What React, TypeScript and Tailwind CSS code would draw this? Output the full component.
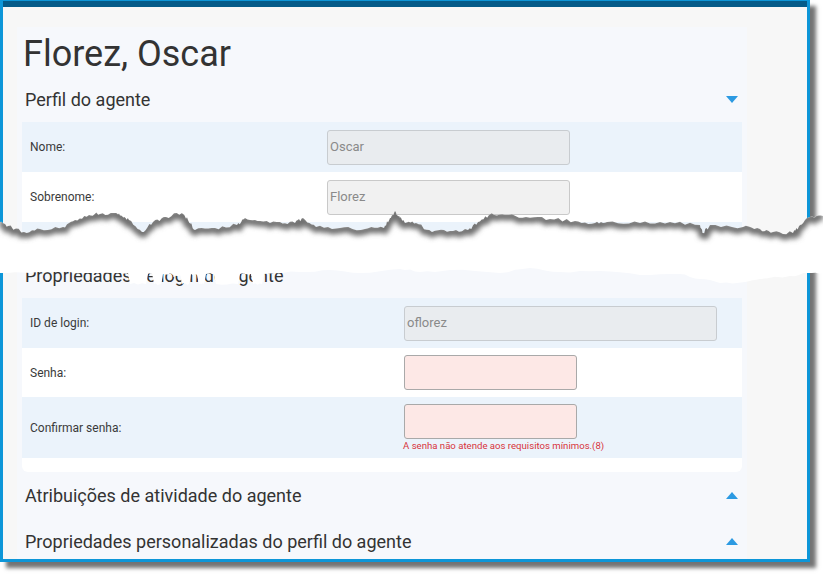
import React from "react";

type Pt = [number, number];

// torn paper edges, in page coordinates
const topEdge: Pt[] = [
  [0, 222], [8, 226], [24, 232], [40, 229], [63, 227], [75, 220], [89, 215], [100, 214],
  [116, 213], [122, 216], [129, 220], [142, 232], [153, 222], [166, 217], [182, 213],
  [188, 220], [195, 230], [215, 228], [237, 225], [245, 218], [260, 221], [280, 222],
  [295, 223], [303, 218], [316, 227], [340, 228], [365, 229], [384, 228], [390, 218],
  [395, 211], [400, 218], [405, 223], [416, 223], [432, 232], [450, 231], [468, 230],
  [478, 222], [489, 215], [505, 215], [526, 217], [550, 219], [575, 221], [595, 223],
  [607, 222], [640, 223], [670, 222], [700, 225], [703, 233], [710, 225], [743, 227],
  [760, 229], [773, 232], [793, 233], [800, 225], [810, 217], [823, 216],
];

const bottomEdge: Pt[] = [
  [0, 273], [30, 273], [60, 272], [90, 273], [120, 273], [128, 273], [130, 284], [146, 284],
  [148, 274], [152, 274], [154, 284], [161, 284], [163, 274], [172, 274], [174, 277],
  [180, 275], [182, 284], [189, 284], [191, 274], [197, 275], [199, 284], [204, 284],
  [206, 274], [214, 274], [216, 284], [238, 284], [240, 274], [251, 274], [253, 284],
  [262, 284], [264, 274], [300, 272], [330, 270], [360, 273], [400, 269], [420, 272],
  [450, 270], [500, 273], [530, 268], [560, 272], [600, 271], [640, 275], [680, 274],
  [700, 279], [720, 283], [745, 282], [760, 279], [790, 276], [808, 273], [823, 273],
];

function roughen(pts: Pt[], amp: number, seed: number, steps: number): Pt[] {
  const out: Pt[] = [];
  pts.forEach((p, i) => {
    out.push(p);
    const n = pts[i + 1];
    if (!n) return;
    for (let k = 1; k < steps; k++) {
      const t = k / steps;
      const r = Math.sin(i * 12.9898 + k * 78.233 + seed) * 43758.5453;
      const f = r - Math.floor(r);
      out.push([p[0] + (n[0] - p[0]) * t, p[1] + (n[1] - p[1]) * t + (f - 0.5) * 2 * amp]);
    }
  });
  return out;
}

const top = roughen(topEdge, 1.8, 3, 6);
const bottom = roughen(bottomEdge, 1.0, 7, 4);
const toStr = (pts: Pt[]) => pts.map((p) => `${p[0].toFixed(1)},${p[1].toFixed(1)}`).join(" ");
const gap = toStr([...top, ...[...bottom].reverse()]);

function TornEdge() {
  return (
    <svg
      className="absolute left-0 top-[195px] pointer-events-none"
      width={823}
      height={95}
      viewBox="0 195 823 95"
    >
      <defs>
        <clipPath id="gapClip">
          <polygon points={gap} />
        </clipPath>
        <filter id="blur" x="-5%" y="-50%" width="110%" height="200%">
          <feGaussianBlur stdDeviation="2.6" />
        </filter>
      </defs>
      <polygon points={gap} fill="#ffffff" />
      <g clipPath="url(#gapClip)">
        <polyline
          points={toStr(top.map((p) => [p[0], p[1] + 1.5] as Pt))}
          fill="none"
          stroke="#6f6f6f"
          strokeWidth={8}
          filter="url(#blur)"
        />
      </g>
    </svg>
  );
}

function Caret({ up }: { up?: boolean }) {
  return (
    <svg width="12" height="7" viewBox="0 0 12 7">
      <polygon points={up ? "6,0 12,7 0,7" : "0,0 12,0 6,7"} fill="#2c9ae2" />
    </svg>
  );
}

function SectionHeader({ title, up }: { title: string; up?: boolean }) {
  return (
    <div className="h-[46px] flex items-center justify-between pl-[8px] pr-[9px]">
      <span className="text-[18px] text-[#333]">{title}</span>
      <Caret up={up} />
    </div>
  );
}

function Field({
  value,
  width,
  tone,
}: {
  value?: string;
  width: number;
  tone: "gray" | "light" | "error";
}) {
  const cls =
    tone === "error"
      ? "border-[#a9a9a9] bg-[#fde8e6]"
      : tone === "light"
      ? "border-[#c9c9c9] bg-[#f1f1f1]"
      : "border-[#c8ccd0] bg-[#e9ecef]";
  return (
    <div
      className={`h-[35px] rounded-[3px] border ${cls} pl-[2px] flex items-center text-[13px] text-[#8a8a8a]`}
      style={{ width }}
    >
      {value}
    </div>
  );
}

function Row({
  label,
  labelWidth,
  blue,
  height,
  children,
}: {
  label: string;
  labelWidth: string;
  blue?: boolean;
  height: string;
  children?: React.ReactNode;
}) {
  return (
    <div className={`flex items-center ${height} ${blue ? "bg-[#ebf3fb]" : "bg-white"}`}>
      <div className={`${labelWidth} pl-[8px] text-[12px] text-[#3a3a3a]`}>{label}</div>
      {children}
    </div>
  );
}

export default function App() {
  return (
    <div className="relative w-[823px] h-[577px] bg-white overflow-hidden [font-family:Roboto,'Liberation_Sans',sans-serif]">
      <div className="w-[810px] h-[562px] flex flex-col border-x-[3px] border-b-[3px] border-[#0d96d8] shadow-[6px_6px_4px_rgba(0,0,0,0.55)]">
        <div className="h-[7px] shrink-0 bg-[#055b89] border-t border-[#0d96d8]" />
        <div className="flex-1 overflow-hidden bg-[#f7f7f7] pl-[14px] pt-[20px]">
          <div className="w-[730px] bg-[#f6f8fc] pt-[5px]">
            <h1 className="h-[44px] pl-[6px] text-[36px] leading-[44px] text-[#333]">Florez, Oscar</h1>

            <SectionHeader title="Perfil do agente" />
            <div className="mx-[5px] rounded-b-md bg-white">
              <Row label="Nome:" labelWidth="w-[305px]" blue height="h-[50px]">
                <Field value="Oscar" width={243} tone="gray" />
              </Row>
              <Row label="Sobrenome:" labelWidth="w-[305px]" height="h-[50px]">
                <Field value="Florez" width={243} tone="light" />
              </Row>
              <Row label="E-mail:" labelWidth="w-[305px]" blue height="h-[30px]" />
            </div>

            <SectionHeader title="Propriedades de login do agente" />
            <div className="mx-[5px] rounded-b-md bg-white pb-[14px]">
              <Row label="ID de login:" labelWidth="w-[382px]" blue height="h-[50px]">
                <Field value="oflorez" width={313} tone="gray" />
              </Row>
              <Row label="Senha:" labelWidth="w-[382px]" height="h-[49px]">
                <Field width={173} tone="error" />
              </Row>
              <Row label="Confirmar senha:" labelWidth="w-[382px]" blue height="h-[61px]">
                <div className="flex flex-col pt-[7px] pb-[5px]">
                  <Field width={173} tone="error" />
                  <span className="-ml-px h-[14px] leading-[14px] text-[9.6px] text-[#d8343c]">
                    A senha não atende aos requisitos mínimos.(8)
                  </span>
                </div>
              </Row>
            </div>

            <SectionHeader title="Atribuições de atividade do agente" up />
            <SectionHeader title="Propriedades personalizadas do perfil do agente" up />
          </div>
        </div>
      </div>
      <TornEdge />
    </div>
  );
}
